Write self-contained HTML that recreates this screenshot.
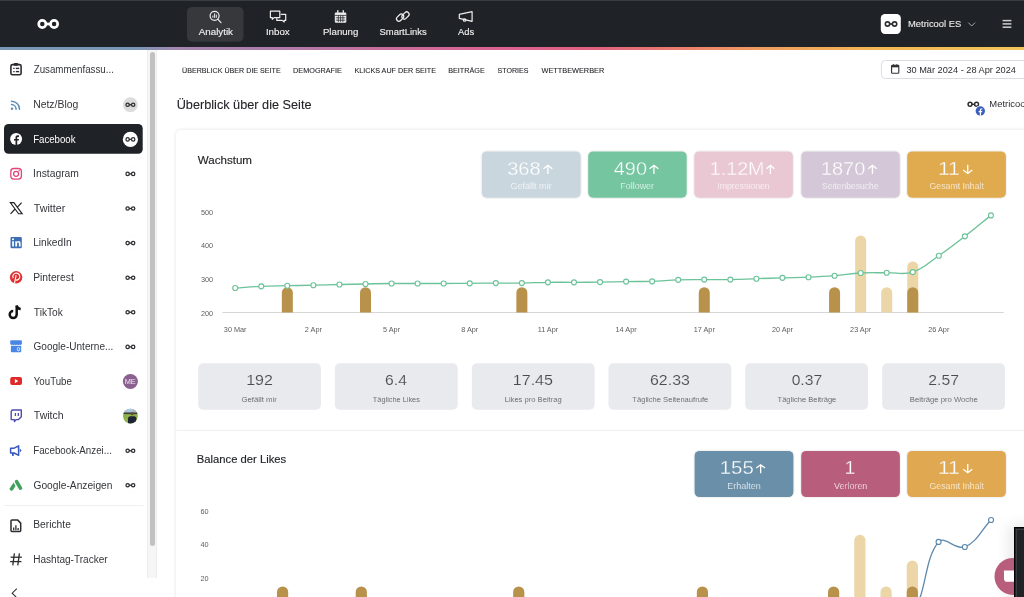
<!DOCTYPE html><html><head><meta charset="utf-8"><style>
*{margin:0;padding:0;box-sizing:border-box}
html,body{width:1024px;height:597px;overflow:hidden;background:#fff;font-family:"Liberation Sans",sans-serif;color:#2b2d31}
.a{position:absolute}
svg text{font-family:"Liberation Sans",sans-serif}
svg{will-change:transform}
</style></head><body>
<div class="a" style="left:0;top:0;width:1024px;height:47px;background:#1f2226;border-top:1px solid #3a3d41"></div>
<div class="a" style="left:0;top:47px;width:1024px;height:3px;background:linear-gradient(90deg,#7898b8 0%,#7898b8 13%,#a486b0 17.5%,#b07aa8 28%,#cc6a9a 40%,#dc6190 50%,#e2607f 58%,#ea7c6e 66%,#f09c60 74%,#f2b852 86%,#f1c55a 100%)"></div>
<div class="a" style="left:176.3px;top:130.3px;width:900px;height:600px;background:#fff;border-radius:5px;box-shadow:0 0 3px 1px rgba(0,0,0,0.075)"></div>
<div class="a" style="left:1013.9px;top:527.1px;width:30px;height:90px;background:#202326;border:1px solid #000;box-shadow:-3px 0 14px 2px rgba(0,0,0,0.10)"></div>
<svg class="a" style="left:0;top:0" width="1024" height="597" viewBox="0 0 1024 597"><circle cx="42.30" cy="24.00" r="3.58" fill="none" stroke="#fff" stroke-width="2.65"/><circle cx="54.10" cy="24.00" r="3.58" fill="none" stroke="#fff" stroke-width="2.65"/><path d="M44.85 22.50L51.25 22.80L51.55 25.50L45.15 25.20z" fill="#fff"/><rect x="187" y="7" width="56.5" height="34.8" rx="5" fill="#36383c"/><text x="198.80" y="34.70" font-size="9.3" fill="#ececec" stroke="#ececec" stroke-width="0.15" textLength="34.22" lengthAdjust="spacingAndGlyphs">Analytik</text><text x="265.92" y="34.70" font-size="9.3" fill="#ececec" stroke="#ececec" stroke-width="0.15" textLength="23.79" lengthAdjust="spacingAndGlyphs">Inbox</text><text x="322.93" y="34.70" font-size="9.3" fill="#ececec" stroke="#ececec" stroke-width="0.15" textLength="35.45" lengthAdjust="spacingAndGlyphs">Planung</text><text x="379.58" y="34.70" font-size="9.3" fill="#ececec" stroke="#ececec" stroke-width="0.15" textLength="47.07" lengthAdjust="spacingAndGlyphs">SmartLinks</text><text x="458.00" y="34.70" font-size="9.3" fill="#ececec" stroke="#ececec" stroke-width="0.15" textLength="16.11" lengthAdjust="spacingAndGlyphs">Ads</text><circle cx="214.6" cy="15.8" r="4.5" fill="none" stroke="#eeeeee" stroke-width="1.2" stroke-linecap="round" stroke-linejoin="round"/><line x1="217.8" y1="19.1" x2="221" y2="22.6" fill="none" stroke="#eeeeee" stroke-width="1.2" stroke-linecap="round" stroke-linejoin="round"/><g stroke="#eee" stroke-width="1"><line x1="212.9" y1="15.6" x2="212.9" y2="17.8"/><line x1="214.6" y1="13.4" x2="214.6" y2="17.8"/><line x1="216.3" y1="14.6" x2="216.3" y2="17.8"/></g><path d="M270.4 11.2h9.4v6.4h-5.6l-1.9 1.7v-1.7h-1.9z" fill="none" stroke="#eeeeee" stroke-width="1.2" stroke-linecap="round" stroke-linejoin="round"/><path d="M281.3 14.3h4.4v6.1h-1.5v1.6l-2-1.6h-5.4v-1.9" fill="none" stroke="#eeeeee" stroke-width="1.2" stroke-linecap="round" stroke-linejoin="round"/><rect x="334.8" y="12.4" width="11.5" height="10.4" rx="1.3" fill="#eee"/><line x1="337.8" y1="10.6" x2="337.8" y2="13.2" stroke="#eee" stroke-width="1.3" stroke-linecap="round"/><line x1="343.3" y1="10.6" x2="343.3" y2="13.2" stroke="#eee" stroke-width="1.3" stroke-linecap="round"/><g stroke="#1f2226" stroke-width="0.75"><line x1="334.8" y1="15.4" x2="346.3" y2="15.4"/><line x1="335.8" y1="17.8" x2="345.3" y2="17.8"/><line x1="335.8" y1="20.2" x2="345.3" y2="20.2"/><line x1="338.3" y1="15.4" x2="338.3" y2="22"/><line x1="340.6" y1="15.4" x2="340.6" y2="22"/><line x1="342.9" y1="15.4" x2="342.9" y2="22"/></g><g transform="translate(400.1 17.6) rotate(-45)"><rect x="-4.1" y="-2.4" width="8.2" height="4.8" rx="2.4" fill="none" stroke="#eeeeee" stroke-width="1.2" stroke-linecap="round" stroke-linejoin="round"/></g><g transform="translate(405.5 15.5) rotate(-45)"><rect x="-4.1" y="-2.4" width="8.2" height="4.8" rx="2.4" fill="none" stroke="#eeeeee" stroke-width="1.2" stroke-linecap="round" stroke-linejoin="round"/></g><path d="M459.3 14.4L472.1 11.6V21.3L459.3 18.3Z" fill="none" stroke="#eeeeee" stroke-width="1.2" stroke-linecap="round" stroke-linejoin="round"/><circle cx="464.6" cy="20" r="1.25" fill="none" stroke="#eeeeee" stroke-width="1.2" stroke-linecap="round" stroke-linejoin="round"/><rect x="880.8" y="14" width="20" height="20" rx="4.2" fill="#fff"/><circle cx="887.51" cy="24.00" r="2.15" fill="none" stroke="#2b2d31" stroke-width="1.59"/><circle cx="894.59" cy="24.00" r="2.15" fill="none" stroke="#2b2d31" stroke-width="1.59"/><path d="M889.04 23.10L892.88 23.28L893.06 24.90L889.22 24.72z" fill="#2b2d31"/><text x="908.00" y="26.80" font-size="8.6" fill="#ebebeb" stroke="#ebebeb" stroke-width="0.1" textLength="53.26" lengthAdjust="spacingAndGlyphs">Metricool ES</text><path d="M968.3 22.6l3.4 3.4 3.4-3.4" fill="none" stroke="#b8b8b8" stroke-width="0.9"/><g stroke="#cfcfcf" stroke-width="1.5"><line x1="1002.6" y1="20.6" x2="1011.4" y2="20.6"/><line x1="1002.6" y1="23.9" x2="1011.4" y2="23.9"/><line x1="1002.6" y1="27.2" x2="1011.4" y2="27.2"/></g><rect x="4" y="124" width="138.7" height="29.7" rx="4.5" fill="#1f2226"/><text x="33.71" y="73.40" font-size="10" fill="#34363a" textLength="80.17" lengthAdjust="spacingAndGlyphs">Zusammenfassu...</text><text x="33.17" y="108.00" font-size="10" fill="#34363a" textLength="45.16" lengthAdjust="spacingAndGlyphs">Netz/Blog</text><text x="33.23" y="142.60" font-size="10" fill="#ffffff" textLength="42.29" lengthAdjust="spacingAndGlyphs">Facebook</text><text x="33.07" y="177.20" font-size="10" fill="#34363a" textLength="45.86" lengthAdjust="spacingAndGlyphs">Instagram</text><text x="33.79" y="211.80" font-size="10" fill="#34363a" textLength="31.57" lengthAdjust="spacingAndGlyphs">Twitter</text><text x="33.18" y="246.40" font-size="10" fill="#34363a" textLength="38.54" lengthAdjust="spacingAndGlyphs">LinkedIn</text><text x="33.18" y="281.00" font-size="10" fill="#34363a" textLength="40.59" lengthAdjust="spacingAndGlyphs">Pinterest</text><text x="33.80" y="315.60" font-size="10" fill="#34363a" textLength="29.02" lengthAdjust="spacingAndGlyphs">TikTok</text><text x="33.50" y="350.20" font-size="10" fill="#34363a" textLength="79.90" lengthAdjust="spacingAndGlyphs">Google-Unterne...</text><text x="33.81" y="384.80" font-size="10" fill="#34363a" textLength="38.08" lengthAdjust="spacingAndGlyphs">YouTube</text><text x="33.79" y="419.40" font-size="10" fill="#34363a" textLength="29.83" lengthAdjust="spacingAndGlyphs">Twitch</text><text x="33.22" y="454.00" font-size="10" fill="#34363a" textLength="78.66" lengthAdjust="spacingAndGlyphs">Facebook-Anzei...</text><text x="33.49" y="488.60" font-size="10" fill="#34363a" textLength="78.95" lengthAdjust="spacingAndGlyphs">Google-Anzeigen</text><text x="33.18" y="528.20" font-size="10" fill="#34363a" textLength="37.67" lengthAdjust="spacingAndGlyphs">Berichte</text><text x="33.20" y="562.80" font-size="10" fill="#34363a" textLength="74.45" lengthAdjust="spacingAndGlyphs">Hashtag-Tracker</text><rect x="4" y="505" width="139.5" height="0.8" fill="#ebebeb"/><rect x="147" y="50" width="10" height="528" fill="#f6f6f6"/><rect x="147" y="50" width="0.8" height="528" fill="#ececec"/><rect x="156.2" y="50" width="0.8" height="528" fill="#ececec"/><rect x="150" y="52" width="5" height="494" rx="2.5" fill="#c1c1c1"/><path d="M16.8 588.6l-4.6 4.6 4.6 4.6" fill="none" stroke="#333" stroke-width="1.1"/><circle cx="130.4" cy="104.7" r="7.4" fill="#dcdcdc"/><circle cx="127.63" cy="104.70" r="1.68" fill="none" stroke="#2b2d31" stroke-width="1.25"/><circle cx="133.17" cy="104.70" r="1.68" fill="none" stroke="#2b2d31" stroke-width="1.25"/><path d="M128.82 104.00L131.84 104.14L131.98 105.41L128.96 105.26z" fill="#2b2d31"/><circle cx="130.4" cy="139.4" r="7.6" fill="#fff"/><circle cx="127.63" cy="139.40" r="1.68" fill="none" stroke="#2b2d31" stroke-width="1.25"/><circle cx="133.17" cy="139.40" r="1.68" fill="none" stroke="#2b2d31" stroke-width="1.25"/><path d="M128.82 138.69L131.84 138.84L131.98 140.11L128.96 139.96z" fill="#2b2d31"/><circle cx="130.4" cy="173.90000000000003" r="7.4" fill="#fff" stroke="#f8f8f8" stroke-width="0.4"/><circle cx="127.63" cy="173.90" r="1.68" fill="none" stroke="#2b2d31" stroke-width="1.25"/><circle cx="133.17" cy="173.90" r="1.68" fill="none" stroke="#2b2d31" stroke-width="1.25"/><path d="M128.82 173.20L131.84 173.34L131.98 174.61L128.96 174.46z" fill="#2b2d31"/><circle cx="130.4" cy="208.5" r="7.4" fill="#fff" stroke="#f8f8f8" stroke-width="0.4"/><circle cx="127.63" cy="208.50" r="1.68" fill="none" stroke="#2b2d31" stroke-width="1.25"/><circle cx="133.17" cy="208.50" r="1.68" fill="none" stroke="#2b2d31" stroke-width="1.25"/><path d="M128.82 207.79L131.84 207.94L131.98 209.21L128.96 209.06z" fill="#2b2d31"/><circle cx="130.4" cy="243.10000000000002" r="7.4" fill="#fff" stroke="#f8f8f8" stroke-width="0.4"/><circle cx="127.63" cy="243.10" r="1.68" fill="none" stroke="#2b2d31" stroke-width="1.25"/><circle cx="133.17" cy="243.10" r="1.68" fill="none" stroke="#2b2d31" stroke-width="1.25"/><path d="M128.82 242.40L131.84 242.54L131.98 243.81L128.96 243.66z" fill="#2b2d31"/><circle cx="130.4" cy="277.70000000000005" r="7.4" fill="#fff" stroke="#f8f8f8" stroke-width="0.4"/><circle cx="127.63" cy="277.70" r="1.68" fill="none" stroke="#2b2d31" stroke-width="1.25"/><circle cx="133.17" cy="277.70" r="1.68" fill="none" stroke="#2b2d31" stroke-width="1.25"/><path d="M128.82 277.00L131.84 277.14L131.98 278.41L128.96 278.26z" fill="#2b2d31"/><circle cx="130.4" cy="312.3" r="7.4" fill="#fff" stroke="#f8f8f8" stroke-width="0.4"/><circle cx="127.63" cy="312.30" r="1.68" fill="none" stroke="#2b2d31" stroke-width="1.25"/><circle cx="133.17" cy="312.30" r="1.68" fill="none" stroke="#2b2d31" stroke-width="1.25"/><path d="M128.82 311.60L131.84 311.74L131.98 313.00L128.96 312.86z" fill="#2b2d31"/><circle cx="130.4" cy="346.90000000000003" r="7.4" fill="#fff" stroke="#f8f8f8" stroke-width="0.4"/><circle cx="127.63" cy="346.90" r="1.68" fill="none" stroke="#2b2d31" stroke-width="1.25"/><circle cx="133.17" cy="346.90" r="1.68" fill="none" stroke="#2b2d31" stroke-width="1.25"/><path d="M128.82 346.20L131.84 346.34L131.98 347.61L128.96 347.46z" fill="#2b2d31"/><circle cx="130.4" cy="381.50000000000006" r="7.5" fill="#8b5f90"/><text x="124.71" y="384.00" font-size="7" fill="#f2eaf2" textLength="11.09" lengthAdjust="spacingAndGlyphs">ME</text><clipPath id="av"><circle cx="130.4" cy="416.1" r="7.4"/></clipPath><g clip-path="url(#av)"><rect x="122.4" y="408.1" width="16" height="16" fill="#8db348"/><rect x="122.4" y="408.1" width="16" height="5.2" fill="#aeb8bd"/><ellipse cx="128.9" cy="409.6" rx="4" ry="2.2" fill="#a9cde6"/><rect x="122.4" y="412.5" width="16" height="1.6" fill="#3c3f3c"/><path d="M128.0 424.1v-5.6q0-2 2-2.2h4.4q2 .2 2 2.2v5.6z" fill="#1e2433"/><circle cx="132.20000000000002" cy="413.70000000000005" r="1.5" fill="#6b4a3a"/></g><circle cx="130.4" cy="450.70000000000005" r="7.4" fill="#fff" stroke="#f8f8f8" stroke-width="0.4"/><circle cx="127.63" cy="450.70" r="1.68" fill="none" stroke="#2b2d31" stroke-width="1.25"/><circle cx="133.17" cy="450.70" r="1.68" fill="none" stroke="#2b2d31" stroke-width="1.25"/><path d="M128.82 450.00L131.84 450.14L131.98 451.41L128.96 451.26z" fill="#2b2d31"/><circle cx="130.4" cy="485.30000000000007" r="7.4" fill="#fff" stroke="#f8f8f8" stroke-width="0.4"/><circle cx="127.63" cy="485.30" r="1.68" fill="none" stroke="#2b2d31" stroke-width="1.25"/><circle cx="133.17" cy="485.30" r="1.68" fill="none" stroke="#2b2d31" stroke-width="1.25"/><path d="M128.82 484.60L131.84 484.74L131.98 486.01L128.96 485.86z" fill="#2b2d31"/><rect x="10.9" y="64.6" width="10.2" height="10.2" rx="1.6" fill="none" stroke="#2b2d31" stroke-width="1.6"/><rect x="13.9" y="62.9" width="4.2" height="2.8" rx="0.7" fill="#2b2d31"/><g stroke="#2b2d31" stroke-width="1.4"><line x1="13.2" y1="68.4" x2="14.6" y2="68.4"/><line x1="15.8" y1="68.4" x2="19.2" y2="68.4"/><line x1="13.2" y1="71.6" x2="14.6" y2="71.6"/><line x1="15.8" y1="71.6" x2="19.2" y2="71.6"/></g><g fill="none" stroke="#5b8db8" stroke-width="1.5" stroke-linecap="round"><path d="M11.5 101.2a8 8 0 0 1 8 8"/><path d="M11.5 104.6a4.6 4.6 0 0 1 4.6 4.6"/></g><circle cx="12" cy="108.7" r="1.2" fill="#5b8db8"/><circle cx="16.1" cy="139" r="6" fill="#fff"/><path d="M17.2 145v-4.4h1.5l.25-1.7h-1.75v-1.1c0-.5.2-.85.9-.85h.9v-1.5c-.2 0-.7-.1-1.3-.1-1.3 0-2.2.8-2.2 2.2v1.35h-1.5v1.7h1.5v4.4z" fill="#1f2226"/><rect x="10.8" y="168.5" width="10.6" height="10.6" rx="3" fill="none" stroke="#e0457b" stroke-width="1.3"/><circle cx="16.1" cy="173.8" r="2.5" fill="none" stroke="#e0457b" stroke-width="1.3"/><circle cx="19.1" cy="170.8" r="0.7" fill="#e0457b"/><path d="M10.3 202.6h3.6l8.3 11.2h-3.6z" fill="none" stroke="#1f2226" stroke-width="1.1"/><line x1="21.6" y1="202.6" x2="17.2" y2="207.4" stroke="#1f2226" stroke-width="1.2"/><line x1="10.6" y1="213.8" x2="15" y2="209" stroke="#1f2226" stroke-width="1.2"/><rect x="10.5" y="236.9" width="11.3" height="11.3" rx="1.2" fill="#3d6db5"/><rect x="12.2" y="241.2" width="1.7" height="5.3" fill="#fff"/><circle cx="13" cy="239.3" r="1" fill="#fff"/><path d="M15.3 241.2h1.6v.8c.3-.5.9-.9 1.8-.9 1.5 0 1.9 1 1.9 2.3v3.1h-1.7v-2.8c0-.7-.2-1.1-.8-1.1s-1 .4-1 1.1v2.8h-1.8z" fill="#fff"/><circle cx="16.1" cy="277.3" r="6.2" fill="#e0302f"/><path d="M13.27 278.35A3.5 3.5 0 1 1 15.69 280.05" fill="none" stroke="#fff" stroke-width="1.1"/><path d="M16.1 275.2L14.5 283.3" stroke="#fff" stroke-width="1.1"/><path d="M16.7 305.4v9.2a3.5 3.5 0 1 1-3.5-3.5" fill="none" stroke="#111" stroke-width="2.5"/><path d="M16.7 305.6c.5 2 1.9 3.2 4 3.4" fill="none" stroke="#111" stroke-width="2.4"/><rect x="10.2" y="340.3" width="11.7" height="4.6" rx="1.3" fill="#4a86e8"/><g fill="#fff"><circle cx="12.2" cy="345" r="0.55"/><circle cx="14.6" cy="345" r="0.55"/><circle cx="17" cy="345" r="0.55"/><circle cx="19.4" cy="345" r="0.55"/></g><rect x="10.9" y="345.7" width="10.3" height="6.6" rx="0.8" fill="#4a86e8"/><rect x="17.4" y="347.6" width="2.2" height="3.2" rx="1" fill="none" stroke="#fff" stroke-width="0.8"/><rect x="10.2" y="377" width="11.8" height="8.1" rx="2" fill="#e02a2a"/><path d="M14.9 379v4.2l3.4-2.1z" fill="#fff"/><g transform="translate(0 1.8)"><path d="M11.2 409.6l1-1.4h9.1v6.8l-2.8 2.8h-2.2l-1.9 1.9v-1.9h-3.2z" fill="none" stroke="#4f4bb0" stroke-width="1.4" stroke-linejoin="round"/><line x1="15.4" y1="411.2" x2="15.4" y2="414.2" stroke="#4f4bb0" stroke-width="1.3"/><line x1="18.3" y1="411.2" x2="18.3" y2="414.2" stroke="#4f4bb0" stroke-width="1.3"/></g><path d="M10.6 448.2h3.6l4.4-2.3v9.4l-4.4-2.3h-3.6z" fill="none" stroke="#3a58c0" stroke-width="1.5" stroke-linejoin="round"/><rect x="12" y="452.8" width="1.8" height="3.1" fill="#3a58c0"/><path d="M19.8 448.6l1.8 1.9-1.8 1.9z" fill="#3a58c0"/><line x1="16.6" y1="481.6" x2="20.4" y2="488.2" stroke="#43a05c" stroke-width="3.6" stroke-linecap="round"/><path d="M13.6 482.6l1.9 3.3-2.5 4.2a1.9 1.9 0 0 1-3.2-1.9z" fill="#43a05c"/><path d="M11.9 519.9h5.6l3.2 3.2v7.4a0.9 0.9 0 0 1-0.9 0.9h-7.9a0.9 0.9 0 0 1-0.9-0.9v-9.7a0.9 0.9 0 0 1 0.9-0.9z" fill="none" stroke="#2b2d31" stroke-width="1.5" stroke-linejoin="round"/><g stroke="#2b2d31" stroke-width="1.3"><line x1="13.7" y1="530.2" x2="13.7" y2="527.4"/><line x1="15.9" y1="530.2" x2="15.9" y2="525.2"/><line x1="18.1" y1="530.2" x2="18.1" y2="528"/></g><g stroke="#2b2d31" stroke-width="1.3"><line x1="14.4" y1="553.4" x2="12.8" y2="565.4"/><line x1="19.4" y1="553.4" x2="17.8" y2="565.4"/><line x1="10.6" y1="557.2" x2="21.8" y2="557.2"/><line x1="10.2" y1="561.6" x2="21.4" y2="561.6"/></g><text x="182.07" y="72.50" font-size="7.0" fill="#222428" stroke="#222428" stroke-width="0.08" textLength="98.64" lengthAdjust="spacingAndGlyphs">ÜBERBLICK ÜBER DIE SEITE</text><text x="293.12" y="72.50" font-size="7.0" fill="#222428" stroke="#222428" stroke-width="0.08" textLength="48.79" lengthAdjust="spacingAndGlyphs">DEMOGRAFIE</text><text x="354.42" y="72.50" font-size="7.0" fill="#222428" stroke="#222428" stroke-width="0.08" textLength="81.58" lengthAdjust="spacingAndGlyphs">KLICKS AUF DER SEITE</text><text x="448.22" y="72.50" font-size="7.0" fill="#222428" stroke="#222428" stroke-width="0.08" textLength="36.48" lengthAdjust="spacingAndGlyphs">BEITRÄGE</text><text x="497.48" y="72.50" font-size="7.0" fill="#222428" stroke="#222428" stroke-width="0.08" textLength="30.95" lengthAdjust="spacingAndGlyphs">STORIES</text><text x="541.46" y="72.50" font-size="7.0" fill="#222428" stroke="#222428" stroke-width="0.08" textLength="62.77" lengthAdjust="spacingAndGlyphs">WETTBEWERBER</text><rect x="881.4" y="60.5" width="170" height="18" rx="4" fill="none" stroke="#d9dce1" stroke-width="1"/><g fill="none" stroke="#2b2d31"><rect x="891.6" y="65.3" width="7.2" height="8" rx="0.8" stroke-width="1.1"/></g><rect x="891.6" y="65.3" width="7.2" height="2" fill="#2b2d31"/><line x1="893.6" y1="64.2" x2="893.6" y2="65.6" stroke="#2b2d31" stroke-width="1"/><line x1="896.8" y1="64.2" x2="896.8" y2="65.6" stroke="#2b2d31" stroke-width="1"/><text x="906.38" y="72.90" font-size="9.3" fill="#2b2d31" textLength="109.57" lengthAdjust="spacingAndGlyphs">30 Mär 2024 - 28 Apr 2024</text><text x="176.65" y="108.90" font-size="12.7" fill="#222428" stroke="#222428" stroke-width="0.1" textLength="134.89" lengthAdjust="spacingAndGlyphs">Überblick über die Seite</text><circle cx="970.05" cy="104.30" r="1.97" fill="none" stroke="#2b2d31" stroke-width="1.46"/><circle cx="976.54" cy="104.30" r="1.97" fill="none" stroke="#2b2d31" stroke-width="1.46"/><path d="M971.46 103.47L974.98 103.64L975.14 105.12L971.62 104.96z" fill="#2b2d31"/><circle cx="980.3" cy="111" r="5.6" fill="#fff"/><circle cx="980.3" cy="111" r="4.7" fill="#3a5fc0"/><path d="M981 115.7v-3.4h1.1l.2-1.3h-1.3v-.8c0-.4.1-.6.7-.6h.7v-1.1c-.1 0-.5-.1-1-.1-1 0-1.6.6-1.6 1.6v1h-1.1v1.3h1.1v3.4z" fill="#fff"/><text x="989.35" y="107.10" font-size="8.3" fill="#2b2d31" textLength="38.29" lengthAdjust="spacingAndGlyphs">Metricool</text><text x="197.74" y="163.60" font-size="10.8" fill="#222428" stroke="#222428" stroke-width="0.15" textLength="54.27" lengthAdjust="spacingAndGlyphs">Wachstum</text><rect x="480.7" y="150.2" width="101.10" height="48.8" rx="6.2" fill="#000" fill-opacity="0.05"/><rect x="481.9" y="151.4" width="98.70" height="46.4" rx="5" fill="#c9d6de"/><text x="507.20" y="174.60" font-size="18" fill="#ffffff" stroke="#c9d6de" stroke-width="0.3" textLength="33.58" lengthAdjust="spacingAndGlyphs">368</text><path d="M547.90 174.00V165.40M543.50 168.80L547.90 165.40L552.30 168.80" fill="none" stroke="#fff" stroke-width="1.3"/><text x="510.45" y="189.20" font-size="8.6" fill="#ffffff" stroke="#c9d6de" stroke-width="0.2" textLength="41.25" lengthAdjust="spacingAndGlyphs">Gefällt mir</text><rect x="587.0" y="150.2" width="100.90" height="48.8" rx="6.2" fill="#000" fill-opacity="0.05"/><rect x="588.2" y="151.4" width="98.50" height="46.4" rx="5" fill="#74c5a0"/><text x="613.80" y="174.60" font-size="18" fill="#ffffff" stroke="#74c5a0" stroke-width="0.3" textLength="33.16" lengthAdjust="spacingAndGlyphs">490</text><path d="M653.95 174.00V165.40M649.50 168.80L653.95 165.40L658.40 168.80" fill="none" stroke="#fff" stroke-width="1.3"/><text x="620.18" y="189.20" font-size="8.6" fill="#ffffff" stroke="#74c5a0" stroke-width="0.2" textLength="33.94" lengthAdjust="spacingAndGlyphs">Follower</text><rect x="693.0999999999999" y="150.2" width="101.00" height="48.8" rx="6.2" fill="#000" fill-opacity="0.05"/><rect x="694.3" y="151.4" width="98.60" height="46.4" rx="5" fill="#e9c8d4"/><text x="709.72" y="174.60" font-size="18" fill="#ffffff" stroke="#e9c8d4" stroke-width="0.3" textLength="54.84" lengthAdjust="spacingAndGlyphs">1.12M</text><path d="M770.40 174.00V165.40M766.40 168.80L770.40 165.40L774.40 168.80" fill="none" stroke="#fff" stroke-width="1.3"/><text x="717.21" y="189.20" font-size="8.6" fill="#ffffff" stroke="#e9c8d4" stroke-width="0.2" textLength="52.54" lengthAdjust="spacingAndGlyphs">Impressionen</text><rect x="800.0999999999999" y="150.2" width="100.90" height="48.8" rx="6.2" fill="#000" fill-opacity="0.05"/><rect x="801.3" y="151.4" width="98.50" height="46.4" rx="5" fill="#d4c8d8"/><text x="820.90" y="174.60" font-size="18" fill="#ffffff" stroke="#d4c8d8" stroke-width="0.3" textLength="44.39" lengthAdjust="spacingAndGlyphs">1870</text><path d="M872.45 174.00V165.40M868.20 168.80L872.45 165.40L876.70 168.80" fill="none" stroke="#fff" stroke-width="1.3"/><text x="822.01" y="189.20" font-size="8.6" fill="#ffffff" stroke="#d4c8d8" stroke-width="0.2" textLength="56.64" lengthAdjust="spacingAndGlyphs">Seitenbesuche</text><rect x="906.0" y="150.2" width="101.10" height="48.8" rx="6.2" fill="#000" fill-opacity="0.05"/><rect x="907.2" y="151.4" width="98.70" height="46.4" rx="5" fill="#e0aa4f"/><text x="937.91" y="174.60" font-size="18" fill="#ffffff" stroke="#e0aa4f" stroke-width="0.3" textLength="22.01" lengthAdjust="spacingAndGlyphs">11</text><path d="M967.75 164.80V173.40M963.20 170.00L967.75 173.40L972.30 170.00" fill="none" stroke="#fff" stroke-width="1.3"/><text x="929.56" y="189.20" font-size="8.6" fill="#ffffff" stroke="#e0aa4f" stroke-width="0.2" textLength="54.32" lengthAdjust="spacingAndGlyphs">Gesamt Inhalt</text><text x="213.2" y="214.79999999999998" text-anchor="end" font-size="7.3" fill="#606060">500</text><text x="213.2" y="248.29999999999998" text-anchor="end" font-size="7.3" fill="#606060">400</text><text x="213.2" y="281.90000000000003" text-anchor="end" font-size="7.3" fill="#606060">300</text><text x="213.2" y="315.6" text-anchor="end" font-size="7.3" fill="#606060">200</text><rect x="222.4" y="312.1" width="781.3" height="0.9" fill="#d2d2d2"/><text x="235.20" y="332.1" text-anchor="middle" font-size="7.3" fill="#606060">30 Mar</text><text x="313.38" y="332.1" text-anchor="middle" font-size="7.3" fill="#606060">2 Apr</text><text x="391.56" y="332.1" text-anchor="middle" font-size="7.3" fill="#606060">5 Apr</text><text x="469.74" y="332.1" text-anchor="middle" font-size="7.3" fill="#606060">8 Apr</text><text x="547.92" y="332.1" text-anchor="middle" font-size="7.3" fill="#606060">11 Apr</text><text x="626.10" y="332.1" text-anchor="middle" font-size="7.3" fill="#606060">14 Apr</text><text x="704.28" y="332.1" text-anchor="middle" font-size="7.3" fill="#606060">17 Apr</text><text x="782.46" y="332.1" text-anchor="middle" font-size="7.3" fill="#606060">20 Apr</text><text x="860.64" y="332.1" text-anchor="middle" font-size="7.3" fill="#606060">23 Apr</text><text x="938.82" y="332.1" text-anchor="middle" font-size="7.3" fill="#606060">26 Apr</text><path d="M855.14 312.4 V240.90 A5.5 5.5 0 0 1 866.14 240.90 V312.4Z" fill="#ecd6a8"/><path d="M881.20 312.4 V292.70 A5.5 5.5 0 0 1 892.20 292.70 V312.4Z" fill="#ecd6a8"/><path d="M907.26 312.4 V267.00 A5.5 5.5 0 0 1 918.26 267.00 V312.4Z" fill="#ecd6a8"/><path d="M281.82 312.4 V292.70 A5.5 5.5 0 0 1 292.82 292.70 V312.4Z" fill="#b8914b"/><path d="M360.00 312.4 V292.70 A5.5 5.5 0 0 1 371.00 292.70 V312.4Z" fill="#b8914b"/><path d="M516.36 312.4 V292.70 A5.5 5.5 0 0 1 527.36 292.70 V312.4Z" fill="#b8914b"/><path d="M698.78 312.4 V292.70 A5.5 5.5 0 0 1 709.78 292.70 V312.4Z" fill="#b8914b"/><path d="M829.08 312.4 V292.70 A5.5 5.5 0 0 1 840.08 292.70 V312.4Z" fill="#b8914b"/><path d="M907.26 312.4 V292.70 A5.5 5.5 0 0 1 918.26 292.70 V312.4Z" fill="#b8914b"/><path d="M235.20 288.00 C245.62 287.32 250.83 286.76 261.26 286.30 C271.67 285.84 276.90 285.92 287.32 285.70 C297.74 285.48 302.96 285.44 313.38 285.20 C323.80 284.96 329.02 284.74 339.44 284.50 C349.86 284.26 355.08 284.20 365.50 284.00 C375.92 283.80 381.14 283.60 391.56 283.50 C401.98 283.40 407.20 283.50 417.62 283.50 C428.04 283.50 433.26 283.54 443.68 283.50 C454.10 283.46 459.32 283.38 469.74 283.30 C480.16 283.22 485.38 283.14 495.80 283.10 C506.22 283.06 511.44 283.26 521.86 283.10 C532.29 282.94 537.49 282.46 547.92 282.30 C558.34 282.14 563.56 282.34 573.98 282.30 C584.40 282.26 589.62 282.24 600.04 282.10 C610.46 281.96 615.68 281.76 626.10 281.60 C636.52 281.44 641.74 281.66 652.16 281.30 C662.59 280.94 667.79 280.14 678.22 279.80 C688.64 279.46 693.86 279.64 704.28 279.60 C714.70 279.56 719.92 279.78 730.34 279.60 C740.77 279.42 745.98 279.06 756.40 278.70 C766.82 278.34 772.03 278.10 782.46 277.80 C792.88 277.50 798.10 277.62 808.52 277.20 C818.95 276.78 824.18 276.54 834.58 275.70 C845.02 274.86 850.19 273.60 860.64 273.00 C871.04 272.40 876.28 272.88 886.70 272.70 C897.13 272.52 903.20 275.22 912.76 272.10 C924.05 268.42 928.68 262.67 938.82 255.70 C949.52 248.35 954.60 244.25 964.88 236.30 C975.45 228.13 980.52 223.76 990.94 215.40" fill="none" stroke="#6cc39a" stroke-width="1.35"/><circle cx="235.20" cy="288.0" r="2.5" fill="#fff" stroke="#6cc39a" stroke-width="1.15"/><circle cx="261.26" cy="286.3" r="2.5" fill="#fff" stroke="#6cc39a" stroke-width="1.15"/><circle cx="287.32" cy="285.7" r="2.5" fill="#fff" stroke="#6cc39a" stroke-width="1.15"/><circle cx="313.38" cy="285.2" r="2.5" fill="#fff" stroke="#6cc39a" stroke-width="1.15"/><circle cx="339.44" cy="284.5" r="2.5" fill="#fff" stroke="#6cc39a" stroke-width="1.15"/><circle cx="365.50" cy="284.0" r="2.5" fill="#fff" stroke="#6cc39a" stroke-width="1.15"/><circle cx="391.56" cy="283.5" r="2.5" fill="#fff" stroke="#6cc39a" stroke-width="1.15"/><circle cx="417.62" cy="283.5" r="2.5" fill="#fff" stroke="#6cc39a" stroke-width="1.15"/><circle cx="443.68" cy="283.5" r="2.5" fill="#fff" stroke="#6cc39a" stroke-width="1.15"/><circle cx="469.74" cy="283.3" r="2.5" fill="#fff" stroke="#6cc39a" stroke-width="1.15"/><circle cx="495.80" cy="283.1" r="2.5" fill="#fff" stroke="#6cc39a" stroke-width="1.15"/><circle cx="521.86" cy="283.1" r="2.5" fill="#fff" stroke="#6cc39a" stroke-width="1.15"/><circle cx="547.92" cy="282.3" r="2.5" fill="#fff" stroke="#6cc39a" stroke-width="1.15"/><circle cx="573.98" cy="282.3" r="2.5" fill="#fff" stroke="#6cc39a" stroke-width="1.15"/><circle cx="600.04" cy="282.1" r="2.5" fill="#fff" stroke="#6cc39a" stroke-width="1.15"/><circle cx="626.10" cy="281.6" r="2.5" fill="#fff" stroke="#6cc39a" stroke-width="1.15"/><circle cx="652.16" cy="281.3" r="2.5" fill="#fff" stroke="#6cc39a" stroke-width="1.15"/><circle cx="678.22" cy="279.8" r="2.5" fill="#fff" stroke="#6cc39a" stroke-width="1.15"/><circle cx="704.28" cy="279.6" r="2.5" fill="#fff" stroke="#6cc39a" stroke-width="1.15"/><circle cx="730.34" cy="279.6" r="2.5" fill="#fff" stroke="#6cc39a" stroke-width="1.15"/><circle cx="756.40" cy="278.7" r="2.5" fill="#fff" stroke="#6cc39a" stroke-width="1.15"/><circle cx="782.46" cy="277.8" r="2.5" fill="#fff" stroke="#6cc39a" stroke-width="1.15"/><circle cx="808.52" cy="277.2" r="2.5" fill="#fff" stroke="#6cc39a" stroke-width="1.15"/><circle cx="834.58" cy="275.7" r="2.5" fill="#fff" stroke="#6cc39a" stroke-width="1.15"/><circle cx="860.64" cy="273.0" r="2.5" fill="#fff" stroke="#6cc39a" stroke-width="1.15"/><circle cx="886.70" cy="272.7" r="2.5" fill="#fff" stroke="#6cc39a" stroke-width="1.15"/><circle cx="912.76" cy="272.1" r="2.5" fill="#fff" stroke="#6cc39a" stroke-width="1.15"/><circle cx="938.82" cy="255.7" r="2.5" fill="#fff" stroke="#6cc39a" stroke-width="1.15"/><circle cx="964.88" cy="236.3" r="2.5" fill="#fff" stroke="#6cc39a" stroke-width="1.15"/><circle cx="990.94" cy="215.4" r="2.5" fill="#fff" stroke="#6cc39a" stroke-width="1.15"/><rect x="198.2" y="363.2" width="122.8" height="46.5" rx="5" fill="#e8eaee"/><text x="246.20" y="385.40" font-size="14.8" fill="#4a4c50" stroke="#e8eaee" stroke-width="0.12" textLength="26.65" lengthAdjust="spacingAndGlyphs">192</text><text x="241.51" y="401.50" font-size="7.5" fill="#4f5155" stroke="#e8eaee" stroke-width="0.12" textLength="35.38" lengthAdjust="spacingAndGlyphs">Gefällt mir</text><rect x="334.9" y="363.2" width="122.8" height="46.5" rx="5" fill="#e8eaee"/><text x="385.12" y="385.40" font-size="14.8" fill="#4a4c50" stroke="#e8eaee" stroke-width="0.12" textLength="21.78" lengthAdjust="spacingAndGlyphs">6.4</text><text x="372.85" y="401.50" font-size="7.5" fill="#4f5155" stroke="#e8eaee" stroke-width="0.12" textLength="47.02" lengthAdjust="spacingAndGlyphs">Tägliche Likes</text><rect x="471.8" y="363.2" width="122.8" height="46.5" rx="5" fill="#e8eaee"/><text x="512.80" y="385.40" font-size="14.8" fill="#4a4c50" stroke="#e8eaee" stroke-width="0.12" textLength="40.19" lengthAdjust="spacingAndGlyphs">17.45</text><text x="504.69" y="401.50" font-size="7.5" fill="#4f5155" stroke="#e8eaee" stroke-width="0.12" textLength="56.96" lengthAdjust="spacingAndGlyphs">Likes pro Beitrag</text><rect x="608.5" y="363.2" width="122.8" height="46.5" rx="5" fill="#e8eaee"/><text x="650.00" y="385.40" font-size="14.8" fill="#4a4c50" stroke="#e8eaee" stroke-width="0.12" textLength="39.87" lengthAdjust="spacingAndGlyphs">62.33</text><text x="632.35" y="401.50" font-size="7.5" fill="#4f5155" stroke="#e8eaee" stroke-width="0.12" textLength="75.87" lengthAdjust="spacingAndGlyphs">Tägliche Seitenaufrufe</text><rect x="745.2" y="363.2" width="122.8" height="46.5" rx="5" fill="#e8eaee"/><text x="791.67" y="385.40" font-size="14.8" fill="#4a4c50" stroke="#e8eaee" stroke-width="0.12" textLength="30.43" lengthAdjust="spacingAndGlyphs">0.37</text><text x="777.55" y="401.50" font-size="7.5" fill="#4f5155" stroke="#e8eaee" stroke-width="0.12" textLength="58.77" lengthAdjust="spacingAndGlyphs">Tägliche Beiträge</text><rect x="882.2" y="363.2" width="122.8" height="46.5" rx="5" fill="#e8eaee"/><text x="928.31" y="385.40" font-size="14.8" fill="#4a4c50" stroke="#e8eaee" stroke-width="0.12" textLength="30.59" lengthAdjust="spacingAndGlyphs">2.57</text><text x="909.88" y="401.50" font-size="7.5" fill="#4f5155" stroke="#e8eaee" stroke-width="0.12" textLength="67.92" lengthAdjust="spacingAndGlyphs">Beiträge pro Woche</text><rect x="176.5" y="430" width="848" height="1" fill="#eeeff1"/><text x="196.80" y="463.00" font-size="11" fill="#222428" stroke="#222428" stroke-width="0.15" textLength="89.39" lengthAdjust="spacingAndGlyphs">Balance der Likes</text><rect x="693.4" y="449.7" width="101.20" height="48.6" rx="6.2" fill="#000" fill-opacity="0.05"/><rect x="694.6" y="450.9" width="98.80" height="46.2" rx="5" fill="#6a8fa8"/><text x="719.67" y="473.90" font-size="18" fill="#ffffff" stroke="#6a8fa8" stroke-width="0.3" textLength="34.12" lengthAdjust="spacingAndGlyphs">155</text><path d="M760.65 473.30V464.70M756.30 468.10L760.65 464.70L765.00 468.10" fill="none" stroke="#fff" stroke-width="1.3"/><text x="727.28" y="488.70" font-size="8.6" fill="#ffffff" stroke="#6a8fa8" stroke-width="0.2" textLength="33.56" lengthAdjust="spacingAndGlyphs">Erhalten</text><rect x="800.0" y="449.7" width="101.10" height="48.6" rx="6.2" fill="#000" fill-opacity="0.05"/><rect x="801.2" y="450.9" width="98.70" height="46.2" rx="5" fill="#b85e7c"/><text x="844.63" y="473.90" font-size="18" fill="#ffffff" stroke="#b85e7c" stroke-width="0.3" textLength="10.87" lengthAdjust="spacingAndGlyphs">1</text><text x="834.06" y="488.70" font-size="8.6" fill="#ffffff" stroke="#b85e7c" stroke-width="0.2" textLength="33.28" lengthAdjust="spacingAndGlyphs">Verloren</text><rect x="906.0" y="449.7" width="101.10" height="48.6" rx="6.2" fill="#000" fill-opacity="0.05"/><rect x="907.2" y="450.9" width="98.70" height="46.2" rx="5" fill="#e0a850"/><text x="937.91" y="473.90" font-size="18" fill="#ffffff" stroke="#e0a850" stroke-width="0.3" textLength="22.01" lengthAdjust="spacingAndGlyphs">11</text><path d="M967.75 464.10V472.70M963.20 469.30L967.75 472.70L972.30 469.30" fill="none" stroke="#fff" stroke-width="1.3"/><text x="929.56" y="488.70" font-size="8.6" fill="#ffffff" stroke="#e0a850" stroke-width="0.2" textLength="54.32" lengthAdjust="spacingAndGlyphs">Gesamt Inhalt</text><text x="208.5" y="514.1" text-anchor="end" font-size="7.3" fill="#606060">60</text><text x="208.5" y="547.3000000000001" text-anchor="end" font-size="7.3" fill="#606060">40</text><text x="208.5" y="581.3000000000001" text-anchor="end" font-size="7.3" fill="#606060">20</text><path d="M854.26 620 V540.40 A5.6 5.6 0 0 1 865.46 540.40 V620Z" fill="#ecd6a8"/><path d="M880.50 620 V592.00 A5.6 5.6 0 0 1 891.70 592.00 V620Z" fill="#ecd6a8"/><path d="M906.74 620 V566.20 A5.6 5.6 0 0 1 917.94 566.20 V620Z" fill="#ecd6a8"/><path d="M276.98 620 V592.00 A5.6 5.6 0 0 1 288.18 592.00 V620Z" fill="#b8914b"/><path d="M355.70 620 V592.00 A5.6 5.6 0 0 1 366.90 592.00 V620Z" fill="#b8914b"/><path d="M513.14 620 V592.00 A5.6 5.6 0 0 1 524.34 592.00 V620Z" fill="#b8914b"/><path d="M696.82 620 V592.00 A5.6 5.6 0 0 1 708.02 592.00 V620Z" fill="#b8914b"/><path d="M828.02 620 V592.00 A5.6 5.6 0 0 1 839.22 592.00 V620Z" fill="#b8914b"/><path d="M906.74 620 V592.00 A5.6 5.6 0 0 1 917.94 592.00 V620Z" fill="#b8914b"/><path d="M230.10 612.30 C240.60 612.30 245.84 612.30 256.34 612.30 C266.84 612.30 272.08 612.30 282.58 612.30 C293.08 612.30 298.32 612.30 308.82 612.30 C319.32 612.30 324.56 612.30 335.06 612.30 C345.56 612.30 350.80 612.30 361.30 612.30 C371.80 612.30 377.04 612.30 387.54 612.30 C398.04 612.30 403.28 612.30 413.78 612.30 C424.28 612.30 429.52 612.30 440.02 612.30 C450.52 612.30 455.76 612.30 466.26 612.30 C476.76 612.30 482.00 612.30 492.50 612.30 C503.00 612.30 508.24 612.30 518.74 612.30 C529.24 612.30 534.48 612.30 544.98 612.30 C555.48 612.30 560.72 612.30 571.22 612.30 C581.72 612.30 586.96 612.30 597.46 612.30 C607.96 612.30 613.20 612.30 623.70 612.30 C634.20 612.30 639.44 612.30 649.94 612.30 C660.44 612.30 665.68 612.30 676.18 612.30 C686.68 612.30 691.92 612.30 702.42 612.30 C712.92 612.30 718.16 612.30 728.66 612.30 C739.16 612.30 744.40 612.30 754.90 612.30 C765.40 612.30 770.64 612.30 781.14 612.30 C791.64 612.30 796.88 612.30 807.38 612.30 C817.88 612.30 823.12 612.30 833.62 612.30 C844.12 612.30 849.36 612.30 859.86 612.30 C870.36 612.30 875.60 612.30 886.10 612.30 C896.60 612.30 906.91 612.30 912.34 612.30 C927.90 591.43 923.10 561.17 938.58 541.90 C944.09 535.05 956.10 550.64 964.82 547.00 C977.10 541.88 980.56 530.80 991.06 520.00" fill="none" stroke="#5d88ad" stroke-width="1.3"/><circle cx="938.58" cy="541.9" r="2.5" fill="#fff" stroke="#5d88ad" stroke-width="1.15"/><circle cx="964.82" cy="547.0" r="2.5" fill="#fff" stroke="#5d88ad" stroke-width="1.15"/><circle cx="991.06" cy="520.0" r="2.5" fill="#fff" stroke="#5d88ad" stroke-width="1.15"/></svg>
<svg class="a" style="left:990px;top:550px" width="34" height="47" viewBox="990 550 34 47"><circle cx="1013" cy="576.4" r="18.5" fill="#b85e7c"/><path d="M1003.9 570.6h10.2v11.2h-8.6l-1.4-2z" fill="#fff"/></svg>
<div class="a" style="left:1013.9px;top:527.1px;width:30px;height:90px;background:#202326;border:1px solid #000;box-shadow:inset 1px 1px 0 #202326, inset 2px 2px 0 #3a3d41"></div>
</body></html>
